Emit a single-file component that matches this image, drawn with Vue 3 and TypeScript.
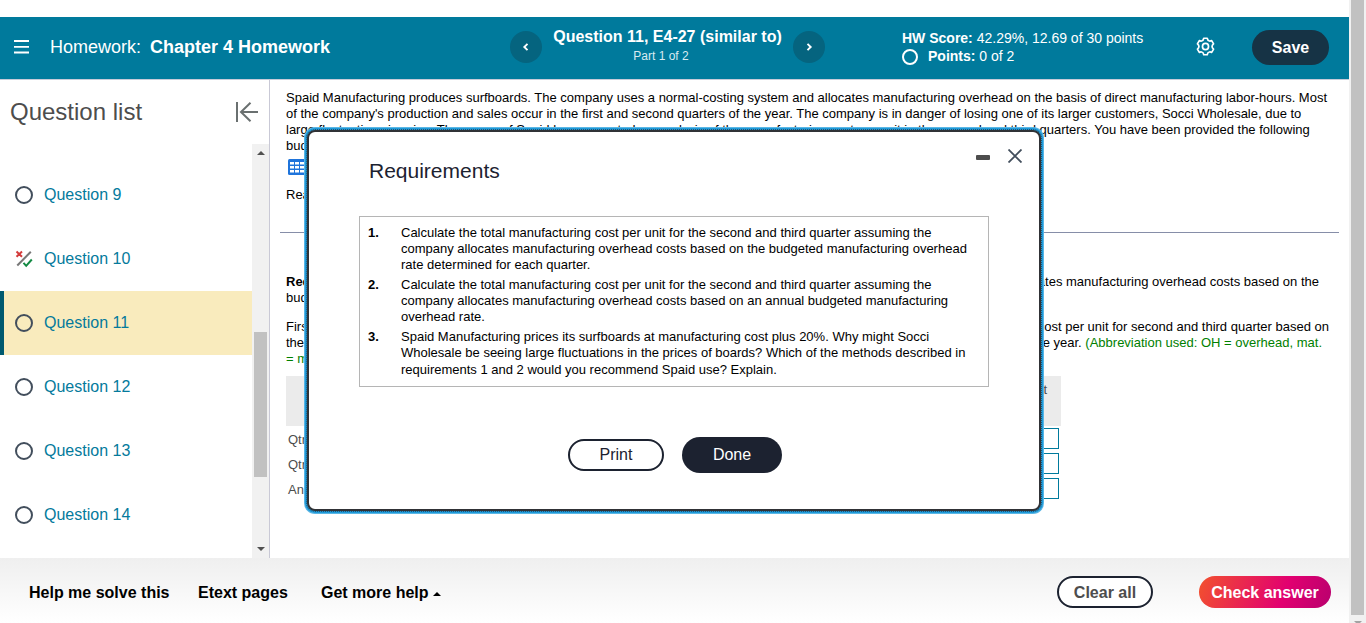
<template>
  <div class="page">
    <div class="main">
      <header class="header">
        <svg class="menu-icon" viewBox="0 0 16 14" aria-label="Menu">
          <path d="M0 1h15M0 6.8h15M0 12.5h15" />
        </svg>
        <div class="assignment">Homework: <b>Chapter 4 Homework</b></div>
        <button class="nav-button" aria-label="Previous question">
          <svg viewBox="0 0 10 10"><path d="M6.5 1.8 3.3 5l3.2 3.2" /></svg>
        </button>
        <div class="current">
          <div class="current-title">Question 11, E4-27 (similar to)</div>
          <div class="current-part">Part 1 of 2</div>
        </div>
        <button class="nav-button" aria-label="Next question">
          <svg viewBox="0 0 10 10"><path d="M3.5 1.8 6.7 5 3.5 8.2" /></svg>
        </button>
        <div class="score">
          <div><b>HW Score:</b> 42.29%, 12.69 of 30 points</div>
          <div class="points"><span class="points-ring"></span><span><b>Points:</b> 0 of 2</span></div>
        </div>
        <svg class="gear" viewBox="0 0 20 20" aria-label="Settings">
          <path d="M8.2 1.3h3.6q.5 2.6 2.3 2.9 1 .3 2.4-.4l2 3.5q-1.6 1.2-1.6 2.7t1.6 2.7l-2 3.5q-1.4-.7-2.4-.4-1.8.3-2.3 2.9H8.2q-.5-2.6-2.3-2.9-1-.3-2.4.4l-2-3.5q1.6-1.2 1.6-2.7T1.5 7.3l2-3.5q1.4.7 2.4.4 1.8-.3 2.3-2.9z" />
          <circle cx="10" cy="10" r="3.2" />
        </svg>
        <button class="save">Save</button>
      </header>

      <div class="content">
        <aside class="sidebar">
          <div class="sidebar-head">
            <h2>Question list</h2>
            <svg class="collapse" viewBox="0 0 23 20">
              <path d="M2 0v20M5.5 10H23M15.5.8 6 10l9.5 9.2" />
            </svg>
          </div>
          <div class="list-wrap">
            <ul class="list">
              <li v-for="q in questions" :key="q.id" :class="{ active: q.id === activeId }">
                <svg v-if="q.partial" class="partial" viewBox="0 0 18 18">
                  <path class="wrong" d="M1.5 1.5 7 6.8M7 1.5 1.5 6.8" />
                  <path class="slash" d="M15.8 1.8 2.3 15.5" />
                  <path class="right" d="m8.5 12.8 2.7 3 5.6-6.3" />
                </svg>
                <span v-else class="ring"></span>
                <a>Question {{ q.id }}</a>
              </li>
            </ul>
            <div class="list-scroll">
              <span class="arrow-up"></span>
              <span class="list-thumb"></span>
              <span class="arrow-down"></span>
            </div>
          </div>
        </aside>

        <main class="problem">
          <div class="intro">
            <div v-for="line in introLines" :key="line" class="line">{{ line }}</div>
          </div>
          <svg class="table-icon" viewBox="0 0 20 16">
            <rect width="20" height="16" rx="1.5" />
            <path d="M2 3h4v2.5H2zM7 3h4v2.5H7zM12 3h4v2.5h-4zM2 7h4v2.5H2zM7 7h4v2.5H7zM12 7h4v2.5h-4zM2 11h4v2.5H2zM7 11h4v2.5H7zM12 11h4v2.5h-4z" />
          </svg>
          <div class="line read">Read the requirements.</div>
          <hr />
          <div class="part">
            <div class="line split first">
              <span><b>Requirement 1.</b> Calculate the total cost per unit</span>
              <span>if the company allocates manufacturing overhead costs based on the</span>
            </div>
            <div class="line">budgeted manufacturing overhead rate determined for each quarter.</div>
          </div>
          <div class="part step">
            <div class="line split second">
              <span>First, complete the table to calculate the total</span>
              <span>manufacturing cost per unit for second and third quarter based on</span>
            </div>
            <div class="line split third">
              <span>the budgeted manufacturing overhead rate</span>
              <span>for the year. <i>(Abbreviation used: OH = overhead, mat.</i></span>
            </div>
            <div class="line"><i>= materials.)</i></div>
          </div>
          <div class="answer">
            <div class="answer-head">Cost</div>
            <div v-for="row in answerRows" :key="row" class="answer-row">
              <span>{{ row }}</span>
              <input type="text" :aria-label="row" />
            </div>
          </div>
        </main>
      </div>

      <footer class="footer">
        <a class="help">Help me solve this</a>
        <a class="etext">Etext pages</a>
        <a class="more">Get more help <span class="caret"></span></a>
        <button class="clear">Clear all</button>
        <button class="check">Check answer</button>
      </footer>
    </div>

    <div class="page-scroll">
      <span class="page-thumb"></span>
      <span class="page-arrow"></span>
    </div>

    <section class="dialog" role="dialog" aria-label="Requirements">
      <div class="dialog-head">
        <h3>Requirements</h3>
        <span class="minimize"></span>
        <svg class="close" viewBox="0 0 14 14"><path d="M.5.5l13 13M13.5.5l-13 13" /></svg>
      </div>
      <ol class="requirements">
        <li v-for="(req, i) in requirements" :key="i">
          <b>{{ i + 1 }}.</b>
          <div>
            <div v-for="line in req" :key="line" class="line">{{ line }}</div>
          </div>
        </li>
      </ol>
      <div class="dialog-actions">
        <button class="print">Print</button>
        <button class="done">Done</button>
      </div>
    </section>
  </div>
</template>

<script setup lang="ts">
import { ref } from 'vue';

interface Question {
  id: number;
  partial?: boolean;
}

const activeId = ref(11);

const questions: Question[] = [
  { id: 9 },
  { id: 10, partial: true },
  { id: 11 },
  { id: 12 },
  { id: 13 },
  { id: 14 },
];

const introLines: string[] = [
  'Spaid Manufacturing produces surfboards. The company uses a normal-costing system and allocates manufacturing overhead on the basis of direct manufacturing labor-hours. Most',
  "of the company's production and sales occur in the first and second quarters of the year. The company is in danger of losing one of its larger customers, Socci Wholesale, due to",
  'large fluctuations in price. The owner of Spaid has requested an analysis of the manufacturing cost per unit in the second and third quarters. You have been provided the following',
  'budgeted information for the coming year:',
];

const answerRows: string[] = ['Qtr 2', 'Qtr 3', 'Annual'];

const requirements: string[][] = [
  [
    'Calculate the total manufacturing cost per unit for the second and third quarter assuming the',
    'company allocates manufacturing overhead costs based on the budgeted manufacturing overhead',
    'rate determined for each quarter.',
  ],
  [
    'Calculate the total manufacturing cost per unit for the second and third quarter assuming the',
    'company allocates manufacturing overhead costs based on an annual budgeted manufacturing',
    'overhead rate.',
  ],
  [
    'Spaid Manufacturing prices its surfboards at manufacturing cost plus 20%. Why might Socci',
    'Wholesale be seeing large fluctuations in the prices of boards? Which of the methods described in',
    'requirements 1 and 2 would you recommend Spaid use? Explain.',
  ],
];
</script>

<style>
body {
  margin: 0;
  overflow: hidden;
}
</style>

<style scoped>
.page {
  position: relative;
  display: flex;
  width: 1366px;
  height: 623px;
  overflow: hidden;
  background: #fff;
  color: #000;
  font-family: 'Liberation Sans', Arial, sans-serif;
  font-size: 13px;
}

.page *,
.page {
  box-sizing: border-box;
}

button {
  padding: 0;
  border: 0;
  font-family: inherit;
  font-size: 16px;
}

svg {
  display: block;
  flex: none;
  fill: none;
}

.main {
  display: flex;
  flex-direction: column;
  width: 1349px;
  padding-top: 17px;
}

/* header */
.header {
  display: flex;
  flex: none;
  align-items: center;
  height: 63px;
  padding: 0 20px 2px 14px;
  background: #007a9c;
  border-bottom: 1px solid #c7cbd9;
  color: #fff;
  white-space: nowrap;
}

.menu-icon {
  width: 16px;
  height: 14px;
  stroke: #fff;
  stroke-width: 1.8;
}

.assignment {
  width: 460px;
  margin-left: 20px;
  font-size: 18px;
}

.assignment b {
  margin-left: 4px;
}

.nav-button {
  display: flex;
  flex: none;
  align-items: center;
  justify-content: center;
  width: 32px;
  height: 32px;
  border-radius: 50%;
  background: #05647f;
}

.nav-button svg {
  width: 10px;
  height: 10px;
  stroke: #fff;
  stroke-width: 1.9;
}

.current {
  width: 251px;
  margin-top: -2px;
  text-align: center;
}

.current-title {
  font-size: 16px;
  font-weight: bold;
  line-height: 20px;
}

.current-part {
  padding-right: 13px;
  color: #d8ebf1;
  font-size: 12px;
  line-height: 18px;
}

.score {
  width: 294px;
  margin-left: 77px;
  font-size: 14px;
  line-height: 18px;
}

.points {
  display: flex;
  align-items: center;
  gap: 10px;
}

.points-ring {
  width: 16px;
  height: 16px;
  margin-top: 1px;
  border: 2px solid #fff;
  border-radius: 50%;
}

.gear {
  width: 19px;
  height: 19px;
  margin-top: -2px;
  stroke: #fff;
  stroke-width: 1.8;
  stroke-linejoin: round;
}

.save {
  width: 77px;
  height: 35px;
  margin-left: auto;
  padding-top: 1px;
  border-radius: 18px;
  background: #163345;
  color: #fff;
  font-weight: bold;
}

.content {
  display: flex;
  height: 478px;
}

/* question list */
.sidebar {
  display: flex;
  flex: none;
  flex-direction: column;
  width: 270px;
  border-right: 1px solid #c9c9d6;
}

.sidebar-head {
  display: flex;
  align-items: center;
  justify-content: space-between;
  height: 64px;
  padding: 0 11px 0 10px;
}

h2 {
  margin: 0;
  color: #4d4d4d;
  font-size: 24px;
  font-weight: normal;
}

.collapse {
  width: 23px;
  height: 20px;
  stroke: #6a7070;
  stroke-width: 2;
}

.list-wrap {
  display: flex;
  height: 414px;
}

.list {
  flex: 1;
  margin: 0;
  padding: 19px 0 0;
  list-style: none;
}

.list li {
  display: flex;
  align-items: center;
  gap: 11px;
  height: 64px;
  padding: 0 0 0 11px;
  border-left: 4px solid transparent;
}

.list li.active {
  background: #f9ebbd;
  border-left-color: #005a70;
}

.list a {
  margin-top: -1px;
  color: #047a9c;
  font-size: 16px;
}

.ring {
  width: 18px;
  height: 18px;
  border: 2px solid #424e5c;
  border-radius: 50%;
}

.partial {
  width: 18px;
  height: 18px;
  stroke-width: 2;
}

.wrong {
  stroke: #d33b3b;
}

.slash {
  stroke: #777;
}

.right {
  stroke: #138a43;
}

.list-scroll {
  display: flex;
  flex-direction: column;
  align-items: center;
  width: 17px;
  background: #f1f1f1;
}

.arrow-up,
.arrow-down {
  width: 0;
  border: 4px solid transparent;
}

.arrow-up {
  margin-top: 3px;
  border-bottom-color: #505050;
}

.arrow-down {
  margin-top: 70px;
  border-top-color: #505050;
}

.list-thumb {
  width: 13px;
  height: 145px;
  margin-top: 177px;
  background: #c1c1c1;
}

/* problem text */
.problem {
  display: flex;
  flex: 1;
  flex-direction: column;
  min-width: 0;
  padding: 10px 10px 0 16px;
}

.line {
  line-height: 16px;
  white-space: nowrap;
}

.table-icon {
  width: 20px;
  height: 16px;
  margin: 5px 0 0 2px;
}

.table-icon rect {
  fill: #1f74db;
}

.table-icon path {
  fill: #fff;
}

.read {
  margin-top: 12px;
}

hr {
  width: 1059px;
  height: 1px;
  margin: 29px 0 0 -6px;
  border: 0;
  background: #868ea8;
}

.part {
  margin-top: 41px;
}

.part.step {
  margin-top: 13px;
}

.part i {
  color: #008000;
  font-style: normal;
}

.split {
  display: flex;
  justify-content: space-between;
}

.first {
  width: 1033px;
}

.second {
  width: 1043px;
}

.third {
  width: 1036px;
}

.answer {
  width: 775px;
  margin-top: 9px;
  color: #4d4d4d;
}

.answer-head {
  height: 50px;
  padding: 6px 14px 0 0;
  background: #ebebeb;
  line-height: 16px;
  text-align: right;
}

.answer-row {
  display: flex;
  align-items: center;
  justify-content: space-between;
  height: 25px;
  padding: 0 2px;
}

.answer-row span {
  padding-top: 2px;
}

.answer-row input {
  width: 60px;
  height: 21px;
  padding: 0;
  border: 1px solid #007a9c;
  background: #fff;
}

/* footer */
.footer {
  display: flex;
  flex: none;
  align-items: center;
  height: 65px;
  padding: 3px 18px 0 29px;
  background: linear-gradient(#efefef, #fff);
  font-size: 16px;
  font-weight: bold;
  white-space: nowrap;
}

.footer a {
  padding-top: 2px;
}

.footer .help {
  width: 169px;
}

.footer .etext {
  width: 123px;
}

.caret {
  display: inline-block;
  margin-bottom: 2px;
  border: 4px solid transparent;
  border-top: 0;
  border-bottom-color: #000;
}

.clear {
  width: 96px;
  height: 32px;
  margin-left: auto;
  padding-top: 1px;
  border: 2px solid #1c2230;
  border-radius: 16px;
  background: #fff;
  color: #4d4d4d;
  font-weight: bold;
}

.check {
  width: 132px;
  height: 32px;
  margin-left: 46px;
  padding-top: 1px;
  border-radius: 16px;
  background: linear-gradient(110deg, #f2512d 0%, #e20070 64%, #b8006e 100%);
  color: #fff;
  font-weight: bold;
}

.page-scroll {
  display: flex;
  flex-direction: column;
  align-items: center;
  width: 17px;
  background: #f1f1f1;
}

.page-thumb {
  flex: none;
  width: 13px;
  height: 615px;
  background: #c1c1c1;
}

.page-arrow {
  flex: none;
  margin-top: 6px;
  border: 4px solid transparent;
  border-top-color: #a3a3a3;
}

/* requirements dialog */
.dialog {
  position: absolute;
  top: 130px;
  left: 307px;
  display: flex;
  flex-direction: column;
  width: 734px;
  height: 381px;
  padding: 0 50px;
  border: 2px solid #303236;
  border-radius: 8px;
  outline: 1px dotted #25506b;
  background: #fff;
  box-shadow: 0 0 0 2px #1f9ad9, 0 0 0 3px #5bb6e4;
}

.dialog-head {
  display: flex;
  height: 84px;
  margin-right: -35px;
  padding: 17px 0 0 10px;
}

h3 {
  flex: 1;
  margin: 10px 0 0;
  color: #1c2230;
  font-size: 21px;
  font-weight: normal;
  line-height: 24px;
}

.minimize {
  width: 14px;
  height: 5px;
  margin: 6px 18px 0 0;
  border-radius: 1px;
  background: #4d4d4d;
}

.close {
  width: 14px;
  height: 14px;
  margin-right: 2px;
  stroke: #424e5c;
  stroke-width: 1.8;
}

.requirements {
  display: flex;
  flex-direction: column;
  gap: 4px;
  width: 630px;
  height: 171px;
  margin: 0;
  padding: 8px 8px 0;
  border: 1px solid #b5b5b5;
  list-style: none;
}

.requirements li {
  display: flex;
}

.requirements li:last-child .line:last-child {
  padding-top: 1px;
}

.requirements b {
  width: 33px;
  line-height: 16px;
}

.dialog-actions {
  display: flex;
  align-items: center;
  gap: 18px;
  margin: 50px 0 0 209px;
}

.print {
  width: 96px;
  height: 32px;
  border: 2px solid #1c2230;
  border-radius: 16px;
  background: #fff;
  color: #1c2230;
}

.done {
  width: 100px;
  height: 36px;
  border-radius: 18px;
  background: #1c2230;
  color: #fff;
}
</style>
